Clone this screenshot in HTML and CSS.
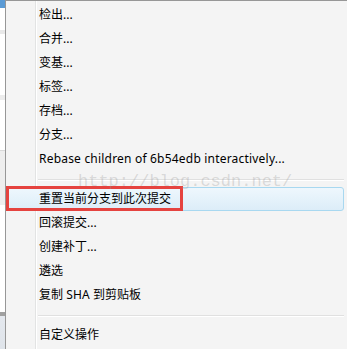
FILE: index.html
```html
<!DOCTYPE html>
<html lang="zh">
<head>
  <meta charset="UTF-8">
  <title>Context menu</title>
  <link rel="stylesheet" href="styles.css">
</head>
<body>
  <div class="screen">
    <div class="app-strip"></div>

    <div class="menu">
      <ul class="menu-list">
        <li class="menu-item">检出...</li>
        <li class="menu-item">合并...</li>
        <li class="menu-item">变基...</li>
        <li class="menu-item">标签...</li>
        <li class="menu-item">存档...</li>
        <li class="menu-item">分支...</li>
        <li class="menu-item"><span class="latin">Rebase children of 6b54edb interactively...</span></li>
        <li class="menu-sep"></li>
        <li class="menu-item hover">重置当前分支到此次提交</li>
        <li class="menu-item">回滚提交...</li>
        <li class="menu-item">创建补丁...</li>
        <li class="menu-item">遴选</li>
        <li class="menu-item">复制 <span class="latin">SHA</span> 到剪贴板</li>
        <li class="menu-sep"></li>
        <li class="menu-item">自定义操作</li>
      </ul>
    </div>

    <!-- screenshot annotations -->
    <div class="red-box"></div>
    <div class="watermark">http://blog.csdn.net/</div>
  </div>
</body>
</html>
```

FILE: styles.css
```css
html, body {
  margin: 0;
  padding: 0;
  background: #f4f4f4;
}

.screen {
  position: relative;
  display: flex;
  width: 347px;
  height: 349px;
  overflow: hidden;
  font-family: "Noto Sans", "Noto Sans CJK SC", sans-serif;
  font-size: 12px;
  color: #000;
}

/* bit of the window behind the menu */
.app-strip {
  width: 5px;
  flex: none;
  background: linear-gradient(to bottom,
    #5b9bd5 0, #5b9bd5 8px,
    #ffffff 8px, #ffffff 30px,
    #e9e9e9 30px, #e9e9e9 34px,
    #ffffff 34px, #ffffff 95px,
    #ececec 95px, #ececec 100px,
    #ffffff 100px, #ffffff 150px,
    #d9d9d9 150px, #d9d9d9 151px,
    #eeeeee 151px, #eeeeee 205px,
    #ffffff 205px, #ffffff 312px,
    #a0a0a0 312px, #a0a0a0 316px,
    #e4e8ee 316px, #dfe4ea 349px);
}

.menu {
  flex: 1;
  border-top: 1px solid #979797;
  border-left: 1px solid #979797;
  padding: 2px 3px 0 1px;
  background:
    linear-gradient(to right, transparent 29px, #e2e3e3 29px, #e2e3e3 30px,
      #ffffff 30px, #ffffff 31px, transparent 31px),
    #f4f4f4;
}

.menu-list {
  list-style: none;
  margin: 0;
  padding: 0;
}

.menu-item {
  height: 24px;
  line-height: 24px;
  padding-left: 32px;
  white-space: nowrap;
}

.latin {
  letter-spacing: 0.2px;
}

.menu-item.hover {
  height: 22px;
  line-height: 22px;
  padding-left: 31px;
  border: 1px solid #a8d8f0;
  border-radius: 3px;
  background: linear-gradient(to bottom, #eef7fd, #dcedf8);
}

.menu-sep {
  height: 16px;
  margin-left: 31px;
  background: linear-gradient(to bottom, transparent 8px, #e0e0e0 8px,
    #e0e0e0 9px, #ffffff 9px, #ffffff 10px, transparent 10px);
}

.red-box {
  position: absolute;
  left: 6px;
  top: 186px;
  width: 171px;
  height: 19px;
  border: 3px solid #e5433f;
}

.watermark {
  position: absolute;
  left: 78px;
  top: 172px;
  font-family: "Liberation Mono", monospace;
  font-size: 17px;
  color: rgba(150, 150, 150, 0.3);
  white-space: nowrap;
}
```
